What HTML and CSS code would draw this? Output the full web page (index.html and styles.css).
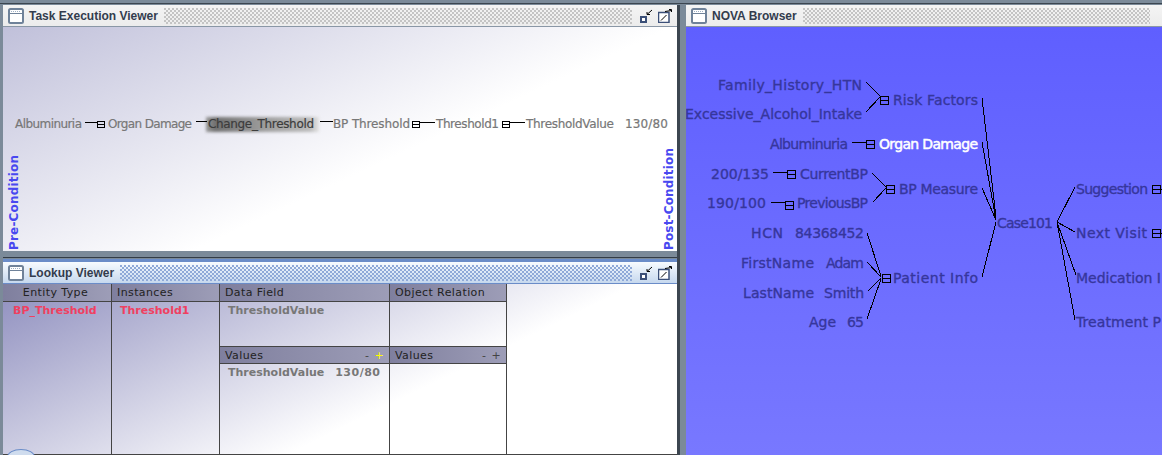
FILE: index.html
```html
<!DOCTYPE html>
<html lang="en">
<head>
    <meta charset="UTF-8">
    <title>NOVA Browser</title>
    <link rel="stylesheet" href="styles.css">
</head>
<body>
    <svg class="defs" width="0" height="0">
        <defs>
            <symbol id="win-icon" viewBox="0 0 16 16">
                <rect x="1" y="1" width="14" height="14" rx="1.5" fill="#fff" stroke="#6f8299" stroke-width="2"/>
                <path d="M2 5.5h12" stroke="#6f8299" stroke-width="1"/>
                <path d="M3 3.5h10" stroke="#9fb0c4" stroke-width="1" stroke-dasharray="1 1"/>
            </symbol>
            <symbol id="min-icon" viewBox="0 0 14 14">
                <rect x="1" y="7" width="7" height="7" fill="#fff"/>
                <rect x="2" y="8" width="5" height="5" fill="#fff" stroke="#3b4f78" stroke-width="2"/>
                <path d="M13 1 8 5.500M8 3v2.500h3" fill="none" stroke="#000"/>
            </symbol>
            <symbol id="max-icon" viewBox="0 0 14 14">
                <rect x=".5" y="3.500" width="10.500" height="10" fill="#fff" stroke="#3b4f78" stroke-width="1.500"/>
                <path d="M3 11.500 8.500 6" stroke="#000"/>
                <path d="M7 2.500 13.500 1.500M11 .5h2.500v2.500" fill="none" stroke="#000"/>
            </symbol>
        </defs>
    </svg>

    <div class="desktop">
        <div class="left-col">
            <section class="window task-window">
                <div class="titlebar">
                    <svg class="win-icon"><use href="#win-icon"/></svg>
                    <span class="title">Task Execution Viewer</span>
                    <span class="bumps"></span>
                    <svg class="btn-min"><use href="#min-icon"/></svg>
                    <svg class="btn-max"><use href="#max-icon"/></svg>
                </div>
                <div class="task-body">
                    <svg class="tree" viewBox="3 27 674 224">
                        <defs>
                            <linearGradient id="hl">
                                <stop offset="0" stop-color="#999"/>
                                <stop offset=".08" stop-color="#707070"/>
                                <stop offset=".55" stop-color="#a0a0a0"/>
                                <stop offset=".92" stop-color="#bbb"/>
                                <stop offset="1" stop-color="#e4e4e4"/>
                            </linearGradient>
                        </defs>
                        <rect class="highlight" x="206" y="117" width="113" height="15" fill="url(#hl)"/>
                        <g class="links">
                            <path d="M85 122H97M196 121H207M320 121 333 122M420 122H435M510 122H525"/>
                            <path class="box" d="M97.500 121.500h7v6h-7zM97.500 124.500h7M412.500 121.500h7v6h-7zM412.500 124.500h7M502.500 121.500h7v6h-7zM502.500 124.500h7"/>
                        </g>
                        <g class="task-text">
                            <text x="15" y="128" textLength="67">Albuminuria</text>
                            <text x="108" y="128" textLength="84">Organ Damage</text>
                            <text class="dark" x="208" y="128" textLength="106">Change_Threshold</text>
                            <text x="333" y="128" textLength="77">BP Threshold</text>
                            <text x="436" y="128" textLength="63">Threshold1</text>
                            <text x="526" y="128" textLength="88">ThresholdValue</text>
                            <text x="625" y="128" textLength="43">130/80</text>
                        </g>
                        <text class="cond" transform="translate(18 250) rotate(-90)" textLength="95">Pre-Condition</text>
                        <text class="cond" transform="translate(673 250) rotate(-90)" textLength="102">Post-Condition</text>
                    </svg>
                </div>
            </section>

            <div class="split-h"></div>

            <section class="window lookup-window">
                <div class="titlebar active">
                    <svg class="win-icon"><use href="#win-icon"/></svg>
                    <span class="title">Lookup Viewer</span>
                    <span class="bumps"></span>
                    <svg class="btn-min"><use href="#min-icon"/></svg>
                    <svg class="btn-max"><use href="#max-icon"/></svg>
                </div>
                <div class="lookup-body">
                    <div class="col col-entity">
                        <div class="head head-center">Entity Type</div>
                        <div class="cell red">BP_Threshold</div>
                    </div>
                    <div class="col col-inst">
                        <div class="head">Instances</div>
                        <div class="cell red cell-inst">Threshold1</div>
                    </div>
                    <div class="col col-data">
                        <div class="head">Data Field</div>
                        <div class="cell cell-top">ThresholdValue</div>
                        <div class="head head-values">
                            <span>Values</span>
                            <span class="pm"><i>-</i><i class="yellow">+</i></span>
                        </div>
                        <div class="cell">ThresholdValue<span class="cell-value">130/80</span></div>
                    </div>
                    <div class="col col-rel">
                        <div class="head">Object Relation</div>
                        <div class="cell cell-top"></div>
                        <div class="head head-values">
                            <span>Values</span>
                            <span class="pm"><i>-</i><i>+</i></span>
                        </div>
                        <div class="cell"></div>
                    </div>
                    <div class="blob"></div>
                </div>
            </section>
        </div>

        <div class="split-v"></div>

        <section class="window nova-window">
            <div class="titlebar">
                <svg class="win-icon"><use href="#win-icon"/></svg>
                <span class="title">NOVA Browser</span>
                <span class="bumps"></span>
            </div>
            <div class="nova-body">
                <svg class="tree" viewBox="686 27 476 428">
                    <g class="links">
                        <path d="M866 82 880 96M866 112 880 97M982 98 996 217M982 142 996 220M982 188 996 220M982 277 996 222"/>
                        <path d="M852 142H866M773 172H787M771 202H785M872 173 886 187M873 202 886 188"/>
                        <path d="M867 233 881 276M867 262 881 277M868 291 881 278M867 319 881 279"/>
                        <path d="M1057 222 1075 187M1057 222 1075 232M1057 222 1076 275M1057 222 1075 320M1160 189H1162M1160 233H1162"/>
                        <path class="box" d="M880.500 96.500h8v8h-8zM880.500 100.500h8M866.500 140.500h8v8h-8zM866.500 144.500h8M787.500 170.500h8v8h-8zM787.500 174.500h8M886.500 185.500h8v8h-8zM886.500 189.500h8M785.500 201.500h8v8h-8zM785.500 205.500h8M882.500 274.500h8v8h-8zM882.500 278.500h8M1152.500 185.500h8v8h-8zM1152.500 189.500h8M1152.500 229.500h8v8h-8zM1152.500 233.500h8"/>
                    </g>
                    <g class="nova-text">
                        <text x="718" y="90" textLength="144">Family_History_HTN</text>
                        <text x="685" y="119" textLength="177">Excessive_Alcohol_Intake</text>
                        <text x="893" y="105" textLength="85">Risk Factors</text>
                        <text x="770" y="149" textLength="78">Albuminuria</text>
                        <text class="selected" x="879" y="149" textLength="99">Organ Damage</text>
                        <text x="711" y="179" textLength="58">200/135</text>
                        <text x="800" y="179" textLength="68">CurrentBP</text>
                        <text x="899" y="194" textLength="79">BP Measure</text>
                        <text x="707" y="208" textLength="59">190/100</text>
                        <text x="797" y="208" textLength="71">PreviousBP</text>
                        <text x="751" y="238" textLength="32">HCN</text>
                        <text x="795" y="238" textLength="69">84368452</text>
                        <text x="741" y="268" textLength="73">FirstName</text>
                        <text x="826" y="268" textLength="38">Adam</text>
                        <text x="743" y="298" textLength="71">LastName</text>
                        <text x="824" y="298" textLength="40">Smith</text>
                        <text x="809" y="327" textLength="27">Age</text>
                        <text x="847" y="327" textLength="17">65</text>
                        <text x="893" y="283" textLength="85">Patient Info</text>
                        <text x="997" y="228" textLength="56">Case101</text>
                        <text x="1076" y="194" textLength="72">Suggestion</text>
                        <text x="1076" y="238" textLength="71">Next Visit</text>
                        <text x="1076" y="283" textLength="85">Medication I</text>
                        <text x="1076" y="327" textLength="85">Treatment P</text>
                    </g>
                </svg>
            </div>
        </section>
    </div>
</body>
</html>
```

FILE: styles.css
```css
html, body {
    margin: 0;
    padding: 0;
    height: 100%;
    overflow: hidden;
}

body {
    background-color: #7b8a99;
    font-family: "Liberation Sans", Arial, sans-serif;
}

.defs {
    display: block;
    height: 0;
}

.desktop {
    display: grid;
    grid-template-columns: 677px 9px 476px;
    height: 455px;
    overflow: hidden;
    background: linear-gradient(#7b8a99 3px, #3c4650 3px, #3c4650 4px, #7b8a99 4px);
}

.left-col {
    display: flex;
    flex-direction: column;
    padding: 5px 0 0 3px;
    height: 450px;
}

.split-v {
    border-left: 3px solid #3c4650;
    box-sizing: border-box;
    margin-top: 5px;
}

.split-h {
    flex: 0 0 11px;
    box-sizing: border-box;
    border-top: 3px solid #7b8a99;
    border-bottom: 3px solid #6a8cc8;
    background: linear-gradient(#7b8a99 3px, #333c46 3px, #333c46 4px, #7b8a99 4px);
}

.window {
    display: flex;
    flex-direction: column;
    overflow: hidden;
    background: #fff;
}

.task-window {
    flex: 0 0 246px;
}

.lookup-window {
    flex: 1;
    min-height: 0;
}

.nova-window {
    margin-top: 5px;
}

/* title bars */
.titlebar {
    flex: 0 0 22px;
    display: flex;
    align-items: center;
    padding: 0 5px;
    background: linear-gradient(#f4f4f4, #ececec);
    border-bottom: 1px solid #8a97a6;
    box-sizing: border-box;
    height: 22px;
}

.titlebar.active {
    background: linear-gradient(#f7fbff, #c6d8ee);
    border-bottom-color: #6a8cc8;
}

.win-icon {
    flex: 0 0 16px;
    width: 16px;
    height: 16px;
}

.title {
    margin-left: 5px;
    font-size: 12px;
    font-weight: bold;
    color: #333c4d;
    white-space: nowrap;
}

.bumps {
    flex: 1;
    height: 16px;
    margin: 0 7px 0 6px;
    background-image:
        radial-gradient(circle at 1px 1px, #c4c4c4 .8px, transparent 1px),
        radial-gradient(circle at 3px 3px, #c4c4c4 .8px, transparent 1px);
    background-size: 4px 4px;
}

.active .bumps {
    background-image:
        radial-gradient(circle at 1px 1px, #8fa9d8 .8px, transparent 1px),
        radial-gradient(circle at 3px 3px, #8fa9d8 .8px, transparent 1px);
}

.btn-min,
.btn-max {
    flex: 0 0 14px;
    width: 14px;
    height: 14px;
}

.btn-max {
    margin-left: 5px;
}

/* tree diagrams */
.tree {
    display: block;
    width: 100%;
    height: 100%;
}

.links path {
    fill: none;
    stroke: #000;
    stroke-width: 1;
    shape-rendering: crispEdges;
}

.highlight {
    filter: blur(1.5px);
}

.task-text text,
.nova-text text,
.cond {
    font-family: "DejaVu Sans", sans-serif;
    font-size: 12px;
}

.task-text text {
    fill: #777;
    stroke: #777;
    stroke-width: .2px;
}

.task-text .dark {
    fill: #3c3c3c;
    stroke: #3c3c3c;
}

.cond {
    fill: #4848f0;
    font-weight: bold;
}

.nova-text text {
    fill: #36369c;
    stroke: #36369c;
    stroke-width: .35px;
    font-size: 14px;
}

.nova-text .selected {
    fill: #fff;
    stroke: #fff;
    stroke-width: .5px;
}

.task-body {
    flex: 1;
    min-height: 0;
    background: linear-gradient(155deg, #c0c0da 0, #fff 58%);
}

.nova-body {
    flex: 1;
    min-height: 0;
    background: linear-gradient(#5f5fff, #7878ff);
}

/* lookup table */
.lookup-body {
    position: relative;
    flex: 1;
    display: grid;
    grid-template-columns: 109px 108px 170px 117px 1fr;
    min-height: 0;
    border-bottom: 1px solid #444;
    background: linear-gradient(154deg, #8e8ebe 0, #fff 62%);
    font-family: "DejaVu Sans", sans-serif;
}

.col {
    display: grid;
    grid-template-rows: 18px 44px 18px 1fr;
    border-right: 1px solid #444;
    box-sizing: border-box;
    min-height: 0;
}

.col-entity,
.col-inst {
    grid-template-rows: 18px 1fr;
}

.head {
    display: flex;
    justify-content: space-between;
    align-items: center;
    padding: 0 5px;
    font-size: 11px;
    letter-spacing: .4px;
    color: #222;
    background: linear-gradient(to right, #7f7f9e, #9d9db7);
    border-bottom: 1px solid #444;
}

.head-center {
    justify-content: center;
    padding-right: 8px;
}

.head-values {
    border-top: 1px solid #444;
}

.pm i {
    font-style: normal;
    margin-left: 5px;
    color: #444;
}

.pm .yellow {
    color: #ffff00;
}

.cell {
    padding: 2px 8px;
    font-size: 11px;
    color: #777;
    font-weight: bold;
    white-space: nowrap;
}

.cell-value {
    margin-left: 11px;
    letter-spacing: .5px;
}

.col-rel .cell {
    padding: 0;
}

.red {
    color: #f04060;
    padding-left: 10px;
}

.cell-inst {
    padding-left: 8px;
}

.blob {
    position: absolute;
    left: 4px;
    bottom: -11px;
    width: 26px;
    height: 14px;
    border-radius: 50%;
    border: 1px solid #6a8cc8;
    background: #cfdcee;
}
```
